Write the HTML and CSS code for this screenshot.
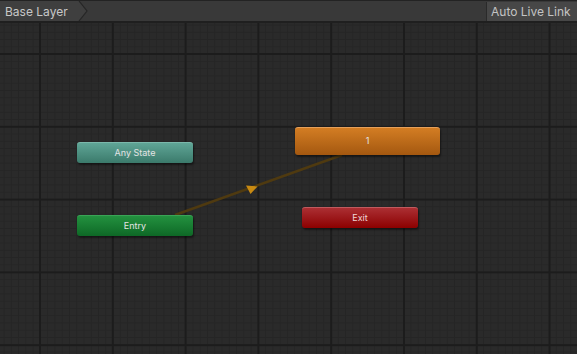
FILE: index.html
```html
<!DOCTYPE html>
<html lang="en">
<head>
  <meta charset="UTF-8" />
  <title>Animator</title>
  <link rel="stylesheet" href="styles.css">
</head>
<body>

  <div class="toolbar">
    <div class="crumb">Base Layer</div>
    <svg class="crumb-arrow" width="12" height="20" viewBox="0 0 12 20">
      <polygon points="0,0 2,0 10,10 2,20 0,20" fill="#3f3f3f" />
      <polyline points="2,0 10,10 2,20" fill="none" stroke="#262626" stroke-width="1.2" />
    </svg>
    <div class="spacer"></div>
    <button class="live-link" type="button">Auto Live Link</button>
  </div>

  <div class="canvas">
    <svg class="links" width="577" height="331" viewBox="0 0 577 331">
      <line x1="175" y1="192" x2="342" y2="132" stroke="#4f3a10" stroke-width="2.4" />
      <polygon points="246,162.5 257.5,163.5 250.5,171" fill="#c88a12" />
    </svg>

    <div class="node any-state" style="left:77px; top:119px;">Any State</div>
    <div class="node entry" style="left:77px; top:192px;">Entry</div>
    <div class="node state default" style="left:295px; top:104px;">1</div>
    <div class="node exit" style="left:302px; top:184px;">Exit</div>
  </div>

</body>
</html>
```

FILE: styles.css
```css
body {
  margin: 0;
  width: 577px;
  height: 354px;
  overflow: hidden;
  background: #282828;
  font-family: Inter, "Noto Sans", sans-serif;
}

/* top bar */
.toolbar {
  height: 20px;
  display: flex;
  align-items: stretch;
  background: #393939;
  border-top: 1px solid #232323;
  border-bottom: 2px solid #1f1f1f;
}

.crumb {
  padding: 0 6px 0 5px;
  color: #c8c8c8;
  font-size: 12px;
  line-height: 21px;
  background: #3f3f3f;
  width: 66px;
}

.crumb-arrow {
  display: block;
}

.spacer {
  flex: 1;
}

.live-link {
  width: 91px;
  margin: 1px 0 0;
  padding: 0 0 0 4px;
  border: none;
  border-left: 1px solid #2a2a2a;
  background: #474747;
  color: #c4c4c4;
  font-family: Inter, "Noto Sans", sans-serif;
  font-size: 12px;
  line-height: 19px;
  text-align: left;
}

/* graph area */
.canvas {
  position: relative;
  height: 331px;
  background-color: #2a2a2a;
  background-image:
    linear-gradient(to right, #1c1c1c 0, #1c1c1c 2px, transparent 2px),
    linear-gradient(to bottom, #1c1c1c 0, #1c1c1c 2px, transparent 2px),
    linear-gradient(to right, #252525 0, #252525 1px, transparent 1px),
    linear-gradient(to bottom, #252525 0, #252525 1px, transparent 1px);
  background-size: 72.8px 100%, 100% 72.8px, 7.28px 100%, 100% 7.28px;
  background-position: 39px 0, 0 30px, 3.6px 0, 0 1.6px;
}

.links {
  position: absolute;
  left: 0;
  top: 0;
}

.node {
  position: absolute;
  width: 116px;
  height: 21px;
  border-radius: 3px;
  color: #e4e4e4;
  font-size: 9px;
  line-height: 21px;
  text-align: center;
  box-shadow: 1px 2px 2px rgba(0, 0, 0, 0.45);
}

.any-state {
  background: linear-gradient(to bottom, #5fa596, #3b7a6b);
  border-top: 1px solid #7bb8ab;
  height: 20px;
  line-height: 20px;
}

.entry {
  background: linear-gradient(to bottom, #23913f, #0e6826);
  border-top: 1px solid #3aa456;
  height: 20px;
  line-height: 20px;
}

.state {
  width: 145px;
  height: 28px;
  line-height: 26px;
}

.default {
  background: linear-gradient(to bottom, #d37d23, #a45810);
  border-top: 1px solid #e6a05a;
  height: 27px;
}

.exit {
  background: linear-gradient(to bottom, #ab2f33, #8c0000);
  border-top: 1px solid #c05a5e;
  height: 20px;
  line-height: 20px;
  color: #eed6d6;
}
```
